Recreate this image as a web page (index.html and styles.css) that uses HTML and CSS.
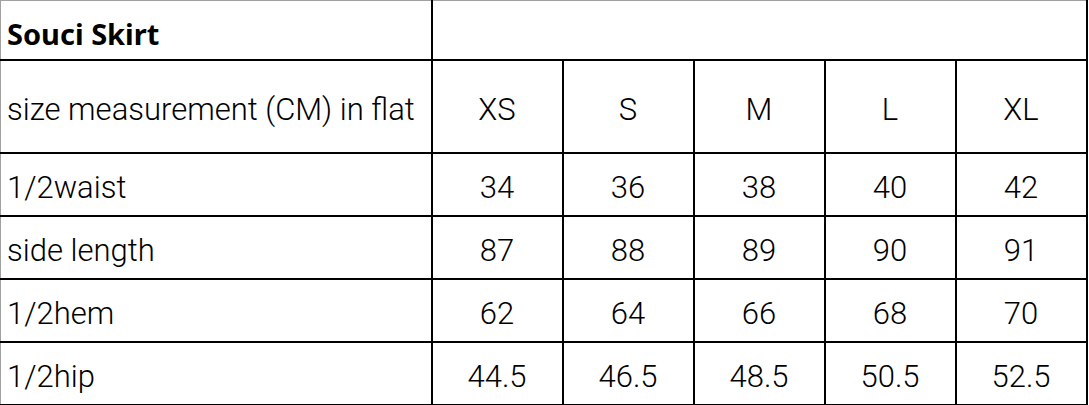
FILE: index.html
```html
<!DOCTYPE html>
<html>
<head>
<meta charset="utf-8">
<link rel="stylesheet" href="styles.css">
</head>
<body>
<table class="size-table">
  <colgroup>
    <col class="col-label">
    <col class="col-size">
    <col class="col-size">
    <col class="col-size">
    <col class="col-size">
    <col class="col-size">
  </colgroup>
  <tr class="row-title">
    <td class="cell-title">Souci Skirt</td>
    <td class="cell-blank" colspan="5"></td>
  </tr>
  <tr class="row-head">
    <td class="cell-label">size measurement (CM) in flat</td>
    <td>XS</td><td>S</td><td>M</td><td>L</td><td>XL</td>
  </tr>
  <tr class="row-data">
    <td class="cell-label">1/2waist</td>
    <td>34</td><td>36</td><td>38</td><td>40</td><td>42</td>
  </tr>
  <tr class="row-data">
    <td class="cell-label">side length</td>
    <td>87</td><td>88</td><td>89</td><td>90</td><td>91</td>
  </tr>
  <tr class="row-data">
    <td class="cell-label">1/2hem</td>
    <td>62</td><td>64</td><td>66</td><td>68</td><td>70</td>
  </tr>
  <tr class="row-data">
    <td class="cell-label">1/2hip</td>
    <td>44.5</td><td>46.5</td><td>48.5</td><td>50.5</td><td>52.5</td>
  </tr>
</table>
</body>
</html>
```

FILE: styles.css
```css
html, body {
  margin: 0;
  padding: 0;
  background: #ffffff;
}

.size-table {
  border-collapse: collapse;
  table-layout: fixed;
  width: 1087px;
  font-family: Roboto, "Noto Sans", sans-serif;
  font-size: 31px;
  font-weight: 300;
  color: #000000;
}

.col-label { width: 431px; }
.col-size { width: 131px; }

.size-table td {
  border: 2px solid #000000;
  padding: 7px 0 0 0;
  text-align: center;
  vertical-align: middle;
  line-height: 1;
  white-space: nowrap;
}

.size-table tr:first-child td {
  border-top: 1px solid #a0a0a0;
}

.size-table td:first-child {
  border-left: 1px solid #a0a0a0;
  text-align: left;
  padding-left: 6px;
}

.row-title { height: 59px; }
.row-head { height: 93px; }
.row-data { height: 63px; }

.cell-title {
  font-family: "Noto Sans", sans-serif;
  font-weight: bold;
  font-size: 29px;
  padding-top: 6px;
}
```
